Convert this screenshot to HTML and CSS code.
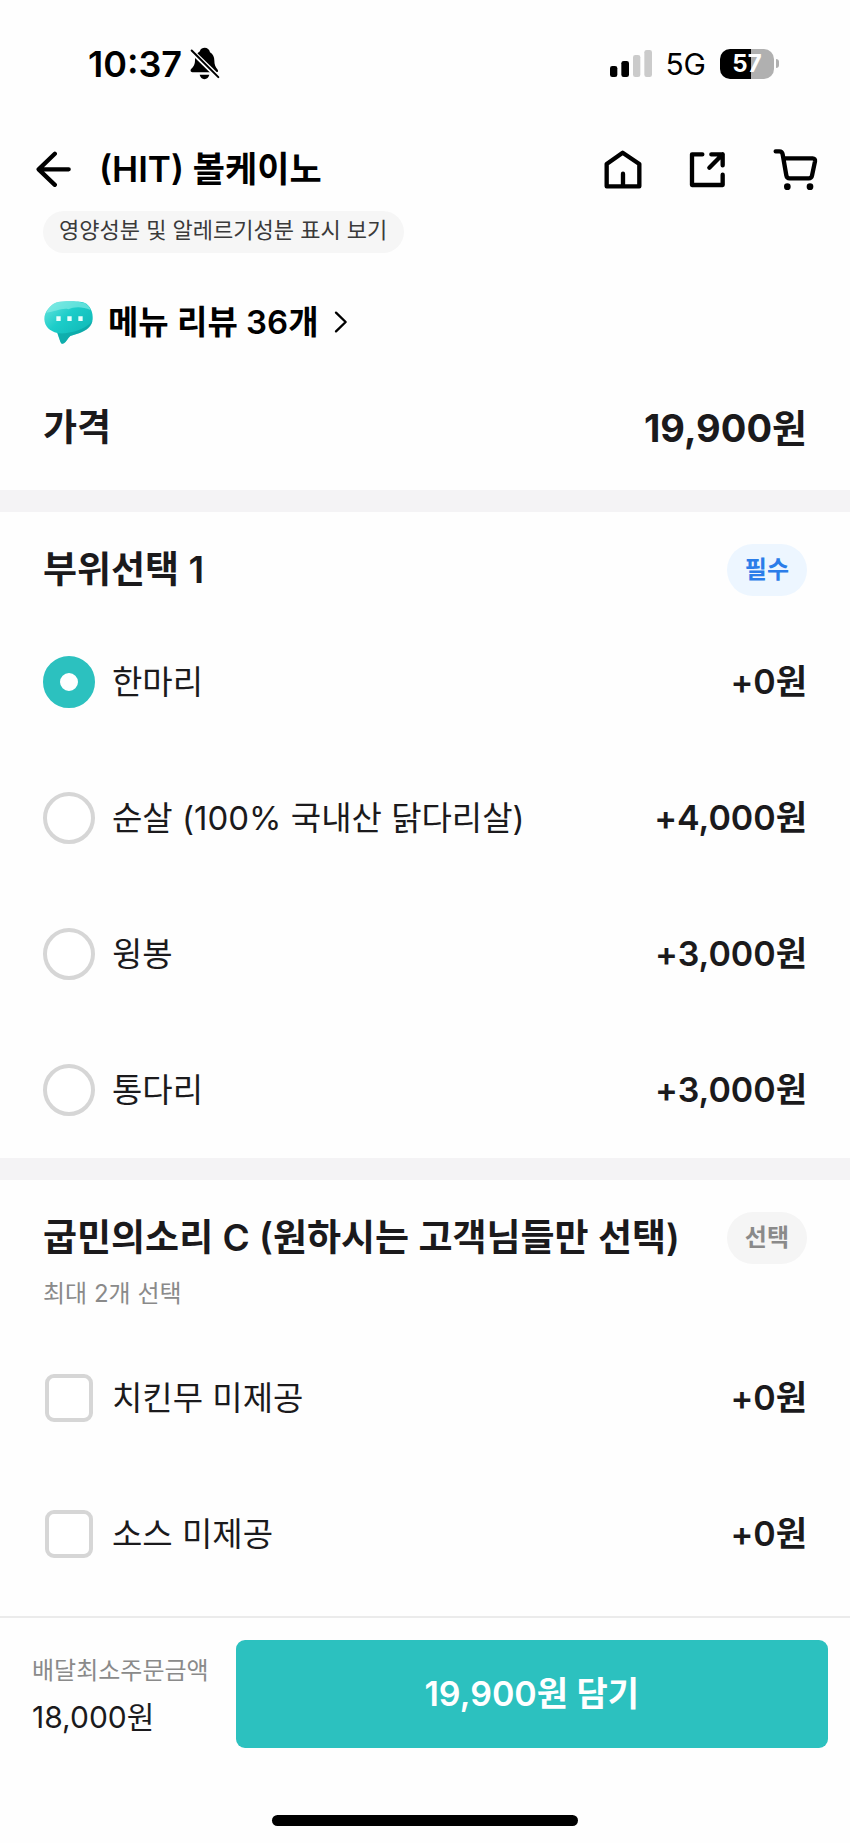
FILE: index.html
```html
<!DOCTYPE html>
<html lang="ko">
<head>
  <meta charset="UTF-8" />
  <meta name="viewport" content="width=device-width, initial-scale=1" />
  <title>(HIT) 볼케이노</title>
  <link rel="stylesheet" href="styles.css">
</head>
<body>

  <div class="status-bar">
    <div class="status-left">
      <span class="time">10:37</span>
      <svg class="icon-bell" viewBox="573 82 90 98" aria-hidden="true">
        <path d="M602 95C605 86 611 84 617 84C625 84 631 89 633 97C642 102 646 112 646 122C646 135 649 141 655 148C659 153 658 157 651 157H580C574 157 573 151 577 147C587 138 588 130 588 120C588 109 593 100 602 95Z" />
        <path d="M602 165H631C629 173 624 178 616 178C609 178 604 173 602 165Z" />
        <path d="M576 92L658 172" fill="none" stroke="#fff" stroke-width="15" />
        <path d="M578 92L658 172" fill="none" stroke="#000" stroke-width="6" stroke-linecap="round" />
      </svg>
    </div>
    <div class="status-right">
      <svg class="icon-signal" viewBox="90 90 126 81" aria-hidden="true">
        <rect x="90" y="138" width="22" height="33" rx="7" />
        <rect x="124" y="123" width="23" height="48" rx="7" />
        <rect x="159" y="105" width="22" height="66" rx="7" fill="#cbcbcb" />
        <rect x="193" y="90" width="23" height="81" rx="7" fill="#cbcbcb" />
      </svg>
      <span class="network">5G</span>
      <span class="battery"><span class="battery-level">57</span></span>
    </div>
  </div>

  <header class="top-bar">
    <button class="icon-btn" aria-label="뒤로">
      <svg class="icon-back" viewBox="109 391 106 108">
        <path d="M166 399L117 446L166 493M118 446H208" />
      </svg>
    </button>
    <h1>(HIT) 볼케이노</h1>
    <nav class="top-actions">
      <a class="icon-btn" href="#" aria-label="홈">
        <svg class="icon-home" viewBox="72 384 114 120">
          <path d="M80 496V429L128 395L178 429V496ZM129 496V458" />
        </svg>
      </a>
      <button class="icon-btn" aria-label="공유">
        <svg class="icon-share" viewBox="333 390 111 111">
          <path d="M373 400H342V492H434V461M400 400H434V433M434 400L394 440" />
        </svg>
      </button>
      <a class="icon-btn" href="#" aria-label="장바구니">
        <svg class="icon-cart" viewBox="579 384 135 129">
          <path d="M587 394H598C604 394 607 397 608 403L619 466C620 472 623 475 629 475H686C692 475 695 472 696 467L705 424C706 418 703 415 698 415H612" />
          <circle cx="622" cy="500" r="10" />
          <circle cx="690" cy="500" r="10" />
        </svg>
      </a>
    </nav>
  </header>

  <main>
    <section class="menu-info">
      <button class="info-pill">영양성분 및 알레르기성분 표시 보기</button>
      <a class="review-link" href="#">
        <svg class="icon-bubble" viewBox="130 122 153 135" aria-hidden="true">
          <defs>
            <linearGradient id="bubbleFill" x1="0" y1="0" x2="1" y2="1">
              <stop offset="0" stop-color="#6fe6df" />
              <stop offset="0.4" stop-color="#1ccdc9" />
              <stop offset="1" stop-color="#0bb0b0" />
            </linearGradient>
          </defs>
          <path d="M172 129C192 124 238 125 254 130C272 137 281 160 279 180C277 200 262 213 240 221L212 230C205 236 199 248 193 252C187 255 184 252 182 247L173 221C150 216 135 202 134 180C133 158 152 136 172 129Z" fill="url(#bubbleFill)" />
          <path d="M172 129C192 125 238 125 254 131C264 136 270 144 273 152C246 140 222 142 206 150C190 144 166 158 140 160C147 144 158 134 172 129Z" fill="#8eeee7" opacity="0.6" />
          <path d="M173 221C196 226 252 216 278 186C275 203 262 213 240 221L212 230C205 236 199 248 193 252C187 255 184 252 182 247Z" fill="#079a99" opacity="0.5" />
          <path d="M170 171h13v14h-13zM203 171h13v14h-13zM236 171h13v14h-13z" fill="#e9fffd" />
        </svg>
        <span>메뉴 리뷰 36개</span>
        <svg class="icon-chevron" viewBox="1000 154 42 66" aria-hidden="true">
          <path d="M1006 159L1035 187L1006 215" />
        </svg>
      </a>
      <div class="price-row">
        <h2>가격</h2>
        <strong class="total-price">19,900원</strong>
      </div>
    </section>

    <section class="option-group">
      <div class="group-head">
        <h2>부위선택 1</h2>
        <span class="badge required">필수</span>
      </div>
      <div class="options">
        <label class="option">
          <input type="radio" name="part" checked />
          <span class="option-name">한마리</span>
          <span class="option-price">+0원</span>
        </label>
        <label class="option">
          <input type="radio" name="part" />
          <span class="option-name">순살 (100% 국내산 닭다리살)</span>
          <span class="option-price">+4,000원</span>
        </label>
        <label class="option">
          <input type="radio" name="part" />
          <span class="option-name">윙봉</span>
          <span class="option-price">+3,000원</span>
        </label>
        <label class="option">
          <input type="radio" name="part" />
          <span class="option-name">통다리</span>
          <span class="option-price">+3,000원</span>
        </label>
      </div>
    </section>

    <section class="option-group">
      <div class="group-head">
        <h2>굽민의소리 C (원하시는 고객님들만 선택)</h2>
        <span class="badge">선택</span>
      </div>
      <p class="group-note">최대 2개 선택</p>
      <div class="options">
        <label class="option">
          <input type="checkbox" />
          <span class="option-name">치킨무 미제공</span>
          <span class="option-price">+0원</span>
        </label>
        <label class="option">
          <input type="checkbox" />
          <span class="option-name">소스 미제공</span>
          <span class="option-price">+0원</span>
        </label>
      </div>
    </section>
  </main>

  <footer class="order-bar">
    <div class="order-row">
      <div class="min-order">
        <span class="min-label">배달최소주문금액</span>
        <span class="min-price">18,000원</span>
      </div>
      <button class="btn-add">19,900원 담기</button>
    </div>
    <div class="home-indicator"></div>
  </footer>

</body>
</html>
```
FILE: styles.css
```css
:root {
  --primary-color: #2cc1bf;
  --text-color: #1b1a1c;
  --muted-color: #8a8a8a;
  --line-color: #d6d6d6;
  --divider-color: #f4f3f5;
  --required-color: #2b7de9;
  --required-bg: #edf6ff;
  --side: 43px;
}

* {
  box-sizing: border-box;
  margin: 0;
}

body {
  display: flex;
  flex-direction: column;
  min-height: 100vh;
  background: #fefefe;
  color: var(--text-color);
  font-family: Inter, "Noto Sans CJK KR", sans-serif;
  font-size: 33px;
  line-height: 40px;
}

button {
  border: none;
  background: none;
  padding: 0;
  color: inherit;
  font: inherit;
  cursor: pointer;
}

a {
  color: inherit;
  text-decoration: none;
}

svg {
  display: block;
}

/* Barra de estado */
.status-bar {
  display: flex;
  justify-content: space-between;
  align-items: center;
  height: 127px;
  padding: 0 71px 0 88px;
  color: #000;
}

.status-left,
.status-right {
  display: flex;
  align-items: center;
}

.status-left {
  gap: 8px;
}

.time {
  font-size: 36px;
  font-weight: 600;
}

.icon-bell {
  width: 30px;
  height: 33px;
}

.icon-signal {
  width: 42px;
  height: 27px;
}

.network {
  margin: 0 14px 0 13px;
  font-size: 30px;
}

.battery {
  display: flex;
  align-items: center;
  gap: 2px;
}

.battery::after {
  content: "";
  width: 3px;
  height: 9px;
  border-radius: 0 3px 3px 0;
  background: #b0b0b0;
}

.battery-level {
  width: 54px;
  border-radius: 10px;
  background: linear-gradient(90deg, #000 57%, #b0b0b0 57%);
  color: #fff;
  font-size: 24px;
  font-weight: 700;
  line-height: 30px;
  text-align: center;
}

/* Cabecera */
.top-bar {
  display: flex;
  align-items: center;
  height: 84px;
  padding: 0 32px 0 36px;
  color: #000;
}

.top-bar h1 {
  flex: 1;
  margin-left: 28px;
  font-size: 35px;
  font-weight: 600;
}

.top-actions {
  display: flex;
  align-items: center;
  gap: 47px;
}

.icon-btn svg,
.icon-chevron {
  fill: none;
  stroke: currentColor;
  stroke-width: 13;
  stroke-linecap: round;
  stroke-linejoin: round;
}

.icon-back {
  width: 35px;
  height: 36px;
}

.icon-home {
  width: 38px;
  height: 40px;
}

.icon-share {
  width: 37px;
  height: 37px;
}

.icon-cart {
  width: 45px;
  height: 43px;
}

.icon-cart circle {
  fill: currentColor;
  stroke: none;
}

/* Info del menu */
.menu-info {
  padding: 0 var(--side);
}

.info-pill {
  display: block;
  padding: 0 17px 4px 16px;
  border-radius: 21px;
  background: #f6f6f6;
  color: #3a3a3a;
  font-size: 22px;
  line-height: 38px;
}

.review-link {
  display: flex;
  align-items: center;
  height: 88px;
  margin-top: 25px;
  color: #000;
  font-weight: 600;
}

.icon-bubble {
  width: 51px;
  height: 45px;
  margin-right: 14px;
}

.icon-chevron {
  width: 14px;
  height: 22px;
  margin-left: 15px;
  stroke-width: 7;
}

.price-row {
  display: flex;
  justify-content: space-between;
  align-items: center;
  height: 124px;
}

h2 {
  font-size: 37px;
  font-weight: 600;
}

.total-price {
  font-size: 38px;
  font-weight: 700;
}

/* Opciones */
.option-group {
  padding: 32px var(--side) 0;
  border-top: 22px solid var(--divider-color);
}

.option-group:last-child {
  padding-bottom: 14px;
}

.group-head {
  display: flex;
  justify-content: space-between;
  align-items: center;
}

.badge {
  padding: 0 18px;
  border-radius: 26px;
  background: #f5f5f5;
  color: var(--muted-color);
  font-size: 24px;
  font-weight: 600;
  line-height: 52px;
}

.badge.required {
  background: var(--required-bg);
  color: var(--required-color);
}

.group-note {
  margin-top: 12px;
  color: var(--muted-color);
  font-size: 24px;
  line-height: 36px;
}

.options {
  margin-top: 18px;
}

.option {
  display: flex;
  align-items: center;
  height: 136px;
  cursor: pointer;
}

.option input {
  appearance: none;
  flex: none;
  width: 52px;
  height: 52px;
  margin-right: 17px;
  border: 4px solid var(--line-color);
  border-radius: 50%;
  background: #fff;
}

.option input:checked {
  border: 17px solid var(--primary-color);
}

.option input[type="checkbox"] {
  width: 48px;
  height: 48px;
  margin: 0 19px 0 2px;
  border-radius: 9px;
}

.option-name {
  flex: 1;
}

.option-price {
  font-size: 34px;
  font-weight: 600;
}

/* Barra de pedido */
.order-bar {
  margin-top: auto;
  border-top: 2px solid #ebebeb;
  padding: 22px 0 17px;
}

.order-row {
  display: flex;
  align-items: center;
  gap: 27px;
  padding: 0 22px 0 32px;
}

.min-order {
  display: flex;
  flex-direction: column;
  gap: 6px;
}

.min-label {
  color: var(--muted-color);
  font-size: 24px;
}

.min-price {
  font-size: 30px;
}

.btn-add {
  flex: 1;
  height: 108px;
  border-radius: 9px;
  background: var(--primary-color);
  color: #fff;
  font-size: 34px;
  font-weight: 600;
}

.home-indicator {
  width: 36%;
  height: 11px;
  margin: 67px auto 0;
  border-radius: 6px;
  background: #000;
}
```
